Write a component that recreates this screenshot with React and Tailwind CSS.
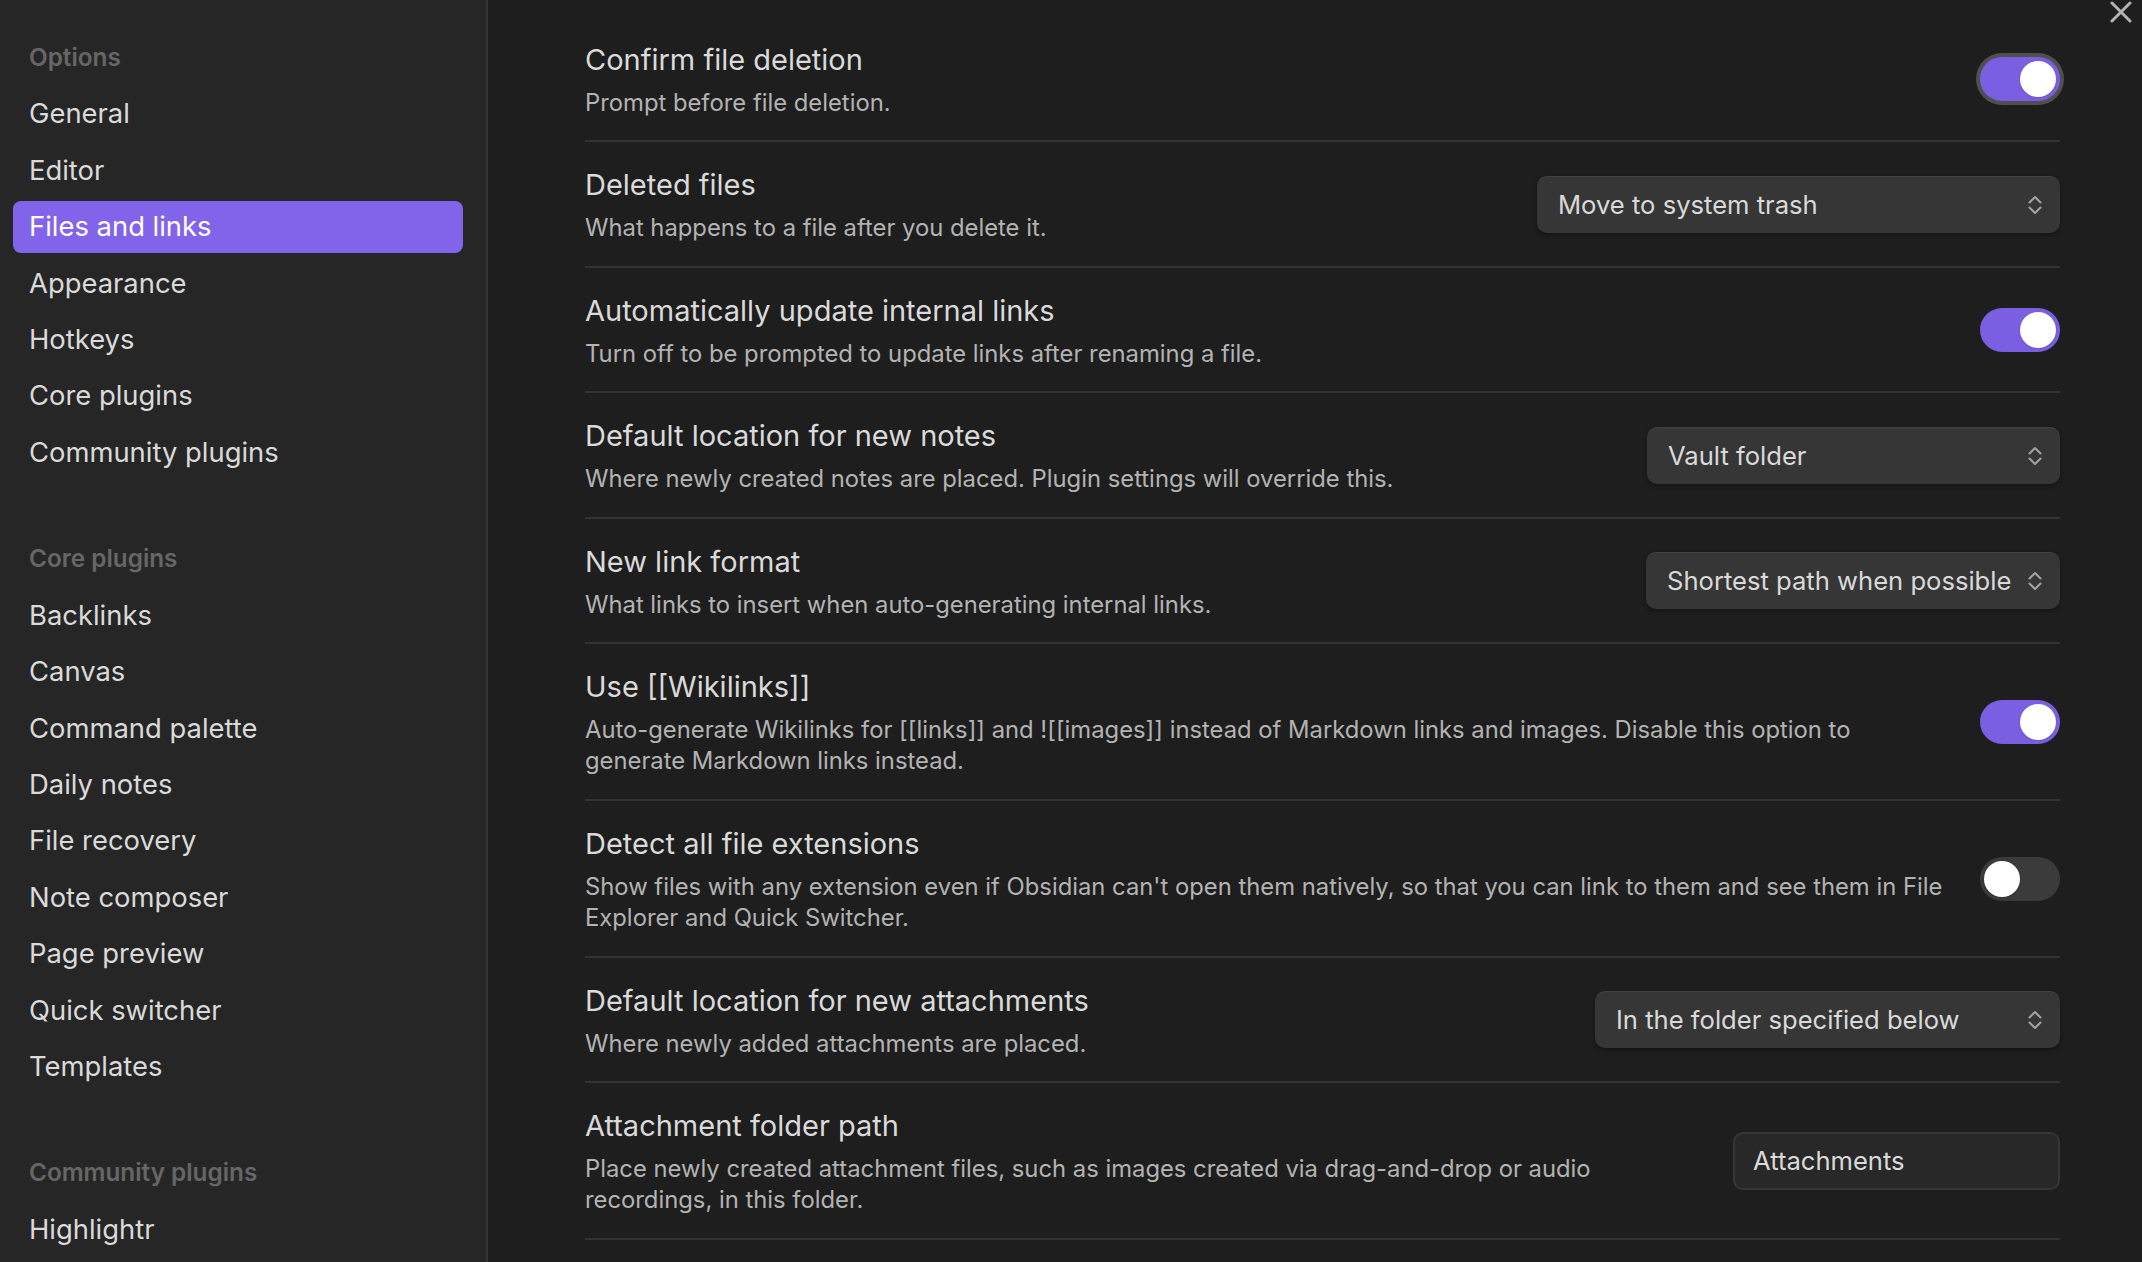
import React from 'react';

const sections = [
  {
    title: 'Options',
    items: ['General', 'Editor', 'Files and links', 'Appearance', 'Hotkeys', 'Core plugins', 'Community plugins'],
  },
  {
    title: 'Core plugins',
    items: [
      'Backlinks',
      'Canvas',
      'Command palette',
      'Daily notes',
      'File recovery',
      'Note composer',
      'Page preview',
      'Quick switcher',
      'Templates',
    ],
  },
  {
    title: 'Community plugins',
    items: ['Highlightr'],
  },
];

const settings = [
  { name: 'Confirm file deletion', desc: ['Prompt before file deletion.'], control: { type: 'toggle', on: true, focus: true } },
  {
    name: 'Deleted files',
    desc: ['What happens to a file after you delete it.'],
    control: { type: 'select', value: 'Move to system trash', width: 'w-[523px]' },
  },
  {
    name: 'Automatically update internal links',
    desc: ['Turn off to be prompted to update links after renaming a file.'],
    control: { type: 'toggle', on: true },
  },
  {
    name: 'Default location for new notes',
    desc: ['Where newly created notes are placed. Plugin settings will override this.'],
    control: { type: 'select', value: 'Vault folder', width: 'w-[413px]' },
  },
  {
    name: 'New link format',
    desc: ['What links to insert when auto-generating internal links.'],
    control: { type: 'select', value: 'Shortest path when possible', width: 'w-[414px]' },
  },
  {
    name: 'Use [[Wikilinks]]',
    desc: [
      'Auto-generate Wikilinks for [[links]] and ![[images]] instead of Markdown links and images. Disable this option to',
      'generate Markdown links instead.',
    ],
    control: { type: 'toggle', on: true },
  },
  {
    name: 'Detect all file extensions',
    desc: [
      "Show files with any extension even if Obsidian can't open them natively, so that you can link to them and see them in File",
      'Explorer and Quick Switcher.',
    ],
    control: { type: 'toggle', on: false },
  },
  {
    name: 'Default location for new attachments',
    desc: ['Where newly added attachments are placed.'],
    control: { type: 'select', value: 'In the folder specified below', width: 'w-[465px]' },
  },
  {
    name: 'Attachment folder path',
    desc: [
      'Place newly created attachment files, such as images created via drag-and-drop or audio',
      'recordings, in this folder.',
    ],
    control: { type: 'input', value: 'Attachments' },
  },
];

const Chevrons = () => (
  <svg width="16" height="20" viewBox="0 0 16 20" fill="none" stroke="#a3a3a3" strokeWidth="2" strokeLinecap="round" strokeLinejoin="round">
    <path d="M2.5 7.5 8 2l5.5 5.5" />
    <path d="M2.5 12.5 8 18l5.5-5.5" />
  </svg>
);

const Toggle = ({ on, focus }) => (
  <div
    className={`w-[80px] h-[44px] rounded-full flex items-center px-[4px] ${
      on ? 'bg-[#7b5fe3] justify-end' : 'bg-[#3b3b3b] justify-start'
    } ${focus ? 'shadow-[0_0_0_4px_#505050]' : ''}`}
  >
    <div className="w-[36px] h-[36px] rounded-full bg-white shadow" />
  </div>
);

const Select = ({ value, width }) => (
  <div
    className={`${width} h-[57px] rounded-[10px] bg-[#363636] border-t border-[#424242] shadow-[0_2px_4px_rgba(0,0,0,0.35)] flex items-center justify-between pl-[21px] pr-[17px] text-[25.6px] text-[#dadada]`}
  >
    <span className="whitespace-nowrap">{value}</span>
    <Chevrons />
  </div>
);

const TextInput = ({ value }) => (
  <div className="w-[327px] h-[58px] rounded-[10px] bg-[#282828] border-2 border-[#363636] flex items-center px-[18px] text-[25.6px] text-[#dadada]">
    {value}
  </div>
);

const SettingRow = ({ item }) => {
  const c = item.control;
  return (
    <div className="flex items-center pt-[23px] pb-[22px] border-b-2 border-[#333333]">
      <div className="flex-1 min-w-0 pr-[24px]">
        <div className="text-[29px] leading-[40px] text-[#dadada]">{item.name}</div>
        <div className="mt-[7px] text-[23.8px] leading-[31.4px] text-[#b3b3b3]">
          {item.desc.map((line, i) => (
            <div key={i} className="whitespace-nowrap">
              {line}
            </div>
          ))}
        </div>
      </div>
      <div className="shrink-0">
        {c.type === 'toggle' && <Toggle on={c.on} focus={c.focus} />}
        {c.type === 'select' && <Select value={c.value} width={c.width} />}
        {c.type === 'input' && <TextInput value={c.value} />}
      </div>
    </div>
  );
};

export default function App() {
  return (
    <div
      className="w-[2142px] h-[1262px] flex overflow-hidden bg-[#1e1e1e] relative"
      style={{ fontFamily: 'Inter, "Noto Sans", "Liberation Sans", sans-serif' }}
    >
      <aside className="w-[488px] shrink-0 h-full bg-[#262626] border-r-2 border-[#333333] pt-[41px] pl-[13px] pr-[23px]">
        {sections.map((section, si) => (
          <div key={section.title} className={si > 0 ? 'mt-[64px]' : ''}>
            <div className="h-[32px] flex items-center pl-[16px] text-[24.3px] font-semibold text-[#666666]">
              {section.title}
            </div>
            <div className="mt-[15px] flex flex-col gap-[4.4px]">
              {section.items.map((label) => {
                const active = label === 'Files and links' && si === 0;
                return (
                  <div
                    key={label}
                    className={`h-[52px] flex items-center pl-[16px] rounded-[8px] text-[27.4px] ${
                      active ? 'bg-[#8264ea] text-white' : 'text-[#dadada]'
                    }`}
                  >
                    {label}
                  </div>
                );
              })}
            </div>
          </div>
        ))}
      </aside>

      <main className="flex-1 h-full pt-[17px] pl-[97px] pr-[82px]">
        {settings.map((item) => (
          <SettingRow key={item.name} item={item} />
        ))}
      </main>

      <button className="absolute top-[1px] right-[10px] w-[22px] h-[22px]">
        <svg width="22" height="22" viewBox="0 0 22 22" stroke="#b3b3b3" strokeWidth="3" strokeLinecap="round">
          <path d="M2 2 20 20M20 2 2 20" />
        </svg>
      </button>
    </div>
  );
}
